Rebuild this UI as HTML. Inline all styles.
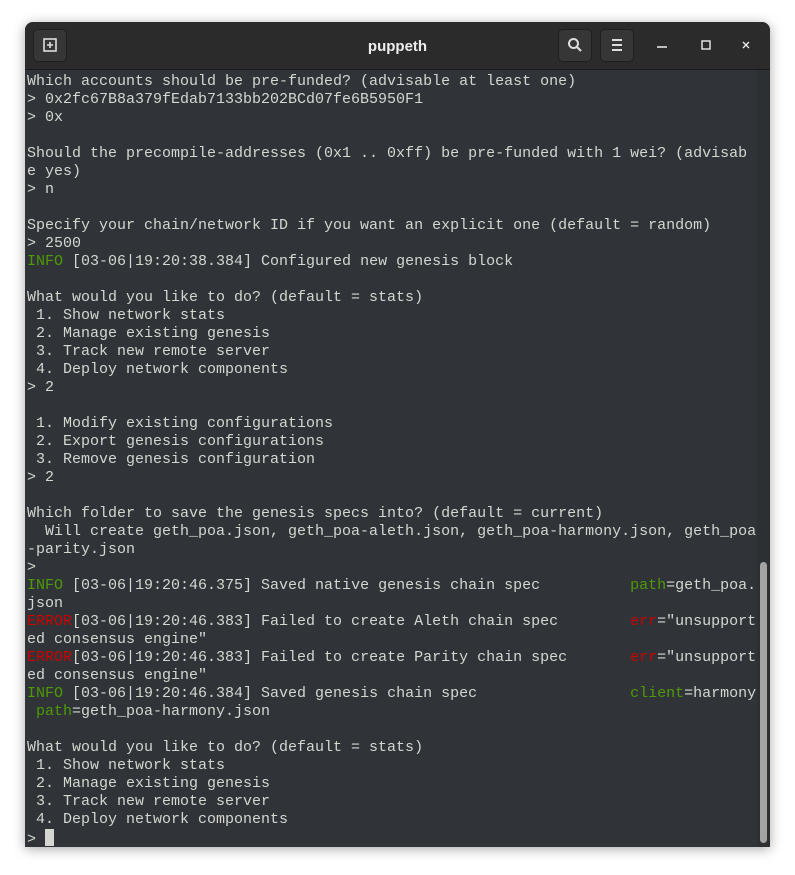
<!DOCTYPE html>
<html><head><meta charset="utf-8"><style>
html,body{margin:0;padding:0;background:#fff;width:795px;height:875px;overflow:hidden}
.win{position:absolute;left:25px;top:22px;width:745px;height:825px;background:#303438;border-radius:8px 8px 0 0;box-shadow:0 2px 12px rgba(0,0,0,.35);overflow:hidden}
.tb{position:absolute;left:0;top:0;width:745px;height:47px;background:#2b2b2b;border-bottom:1px solid #1a1a1a}
.btn{position:absolute;top:7px;width:34px;height:33px;background:#363636;border-radius:5px;border:1px solid #1f1f1f;box-sizing:border-box}
.title{position:absolute;left:0;width:745px;top:16px;text-align:center;color:#eee;font:bold 15px "Liberation Sans",sans-serif}
.term{position:absolute;left:2px;top:51px;margin:0;color:#d3d7cf;font:15px/18px "Liberation Mono",monospace;white-space:pre}
.g{color:#4e9a06}.r{color:#cc0000}
.track{position:absolute;left:732px;top:48px;width:13px;height:777px;background:#2c3033}
.thumb{position:absolute;left:735px;top:540px;width:7px;height:281px;background:#a3a3a3;border-radius:4px}
.cur{display:inline-block;width:9px;height:17px;background:#d3d7cf;vertical-align:-3px}
</style></head><body>
<div class="win">
<div class="tb">
<div class="btn" style="left:8px"><svg width="32" height="31" viewBox="0 0 32 31"><rect x="10" y="9" width="12" height="12" fill="none" stroke="#ddd" stroke-width="1.6"/><path d="M16 12v6M13 15h6" stroke="#ddd" stroke-width="1.6"/></svg></div>
<div class="title">puppeth</div>
<div class="btn" style="left:533px"><svg width="32" height="31" viewBox="0 0 32 31"><circle cx="14.5" cy="13.5" r="4.5" fill="none" stroke="#ddd" stroke-width="2"/><path d="M18 17l4 4" stroke="#ddd" stroke-width="2.2"/></svg></div>
<div class="btn" style="left:575px"><svg width="32" height="31" viewBox="0 0 32 31"><path d="M11 10h10M11 15h10M11 20h10" stroke="#ddd" stroke-width="2"/></svg></div>
<svg style="position:absolute;left:630px;top:16px" width="110" height="16"><path d="M2 9h10" stroke="#eee" stroke-width="1.5"/><rect x="47" y="3" width="8" height="8" fill="none" stroke="#eee" stroke-width="1.4"/><path d="M88 4l6 6M94 4l-6 6" stroke="#eee" stroke-width="1.3"/></svg>
</div>
<div class="track"></div><div class="thumb"></div>
<pre class="term">Which accounts should be pre-funded? (advisable at least one)
&gt; 0x2fc67B8a379fEdab7133bb202BCd07fe6B5950F1
&gt; 0x

Should the precompile-addresses (0x1 .. 0xff) be pre-funded with 1 wei? (advisab
e yes)
&gt; n

Specify your chain/network ID if you want an explicit one (default = random)
&gt; 2500
<span class="g">INFO</span> [03-06|19:20:38.384] Configured new genesis block

What would you like to do? (default = stats)
 1. Show network stats
 2. Manage existing genesis
 3. Track new remote server
 4. Deploy network components
&gt; 2

 1. Modify existing configurations
 2. Export genesis configurations
 3. Remove genesis configuration
&gt; 2

Which folder to save the genesis specs into? (default = current)
  Will create geth_poa.json, geth_poa-aleth.json, geth_poa-harmony.json, geth_poa
-parity.json
&gt;
<span class="g">INFO</span> [03-06|19:20:46.375] Saved native genesis chain spec          <span class="g">path</span>=geth_poa.
json
<span class="r">ERROR</span>[03-06|19:20:46.383] Failed to create Aleth chain spec        <span class="r">err</span>="unsupport
ed consensus engine"
<span class="r">ERROR</span>[03-06|19:20:46.383] Failed to create Parity chain spec       <span class="r">err</span>="unsupport
ed consensus engine"
<span class="g">INFO</span> [03-06|19:20:46.384] Saved genesis chain spec                 <span class="g">client</span>=harmony
 <span class="g">path</span>=geth_poa-harmony.json

What would you like to do? (default = stats)
 1. Show network stats
 2. Manage existing genesis
 3. Track new remote server
 4. Deploy network components
&gt; <span class="cur"></span></pre>
</div>
</body></html>
